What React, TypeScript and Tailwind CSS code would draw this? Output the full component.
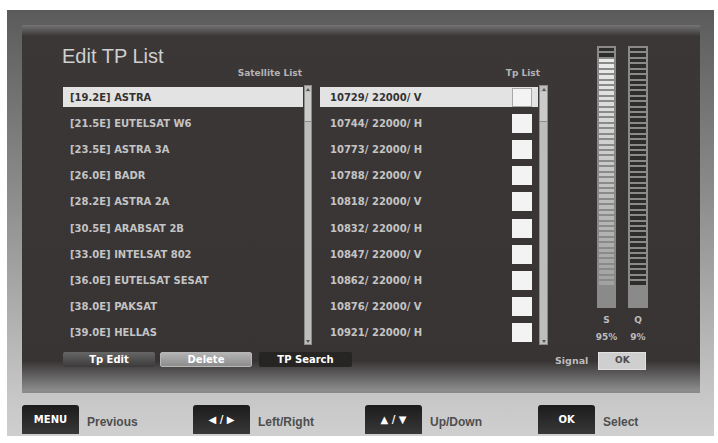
const satellites = [
  "[19.2E] ASTRA",
  "[21.5E] EUTELSAT W6",
  "[23.5E] ASTRA 3A",
  "[26.0E] BADR",
  "[28.2E] ASTRA 2A",
  "[30.5E] ARABSAT 2B",
  "[33.0E] INTELSAT 802",
  "[36.0E] EUTELSAT SESAT",
  "[38.0E] PAKSAT",
  "[39.0E] HELLAS",
]

const transponders = [
  "10729/ 22000/ V",
  "10744/ 22000/ H",
  "10773/ 22000/ H",
  "10788/ 22000/ V",
  "10818/ 22000/ V",
  "10832/ 22000/ H",
  "10847/ 22000/ V",
  "10862/ 22000/ H",
  "10876/ 22000/ V",
  "10921/ 22000/ H",
]

const SEGMENTS = 48

const ScrollBar = ({ width }: { width: string }) => (
  <div className={`flex h-[260px] flex-col border border-[#8c8c8c] bg-[#bdbdbd] ${width}`}>
    <div className="flex h-[6px] items-center justify-center">
      <div className="h-0 w-0 border-x-[2px] border-b-[3px] border-x-transparent border-b-[#555]" />
    </div>
    <div className="h-[30px] border-b border-[#8a8a8a] bg-[#cbcbcb]" />
    <div className="flex-1" />
    <div className="flex h-[6px] items-center justify-center">
      <div className="h-0 w-0 border-x-[2px] border-t-[3px] border-x-transparent border-t-[#555]" />
    </div>
  </div>
)

const SignalBar = ({ filled, width, fade }: { filled: number; width: string; fade: boolean }) => (
  <div className={`flex h-[262px] flex-col gap-[2px] bg-[#8a8a8a] p-[2px] ${width}`}>
    {Array.from({ length: SEGMENTS }, (_, i) => {
      const on = SEGMENTS - 1 - i < filled
      const l = fade && i < SEGMENTS - 4 ? Math.round(238 - (i / (SEGMENTS - 4)) * 78) : 138
      return (
        <div
          key={i}
          className="flex-1"
          style={{ backgroundColor: on ? `rgb(${l},${l},${l})` : "#2f2c2c" }}
        />
      )
    })}
  </div>
)

const FooterKey = ({ keyLabel, text }: { keyLabel: string; text: string }) => (
  <div className="flex items-start">
    <div className="flex h-[29px] w-[57px] items-center justify-center rounded-t-[3px] bg-[linear-gradient(to_bottom,#1c1c1c,#383838)] text-[10px] font-bold text-white">
      {keyLabel}
    </div>
    <span className="ml-[8px] mt-[8px] font-['Liberation_Sans',Arial,sans-serif] text-[12px] font-bold text-[#4e4e4e]">
      {text}
    </span>
  </div>
)

export default function App() {
  return (
    <div className="h-[443px] w-[718px] overflow-hidden bg-white pt-[10px] font-['DejaVu_Sans',sans-serif]">
      <div className="ml-[7px] flex h-[426px] w-[707px] flex-col bg-[linear-gradient(to_bottom,#5b5b5b_0%,#8e8e8e_45%,#c6c6c6_90%,#cfcfcf_100%)] pl-[15px] pt-[15px]">
        {/* main panel */}
        <div className="flex h-[368px] w-[678px] border-b-2 border-[#8a8a8a] bg-[linear-gradient(to_bottom,#747474_0px,#3b3737_11px,#383434_calc(100%_-_30px),#8e8e8e_100%)] pl-[41px] pt-[21px]">
          {/* left column */}
          <div className="flex w-[485px] flex-col">
            <div className="-ml-px h-[20px] font-['Liberation_Sans',Arial,sans-serif] text-[20px] leading-[20px] text-[#cfcfcf]">
              Edit TP List
            </div>
            <div className="mt-[2px] flex h-[10px] text-[9px] font-bold leading-[10px] text-[#b4b4b4]">
              <div className="w-[249px] pr-[10px] text-right">Satellite List</div>
              <div className="ml-[8px] w-[228px] pr-[8px] text-right">Tp List</div>
            </div>
            <div className="mt-[6px] flex h-[262px]">
              {/* satellite list */}
              <div className="flex w-[240px] flex-col">
                {satellites.map((name, i) => (
                  <div key={name} className="flex h-[26.2px] items-center">
                    <div
                      className={`flex h-[20px] w-full items-center pl-[7px] text-[10px] font-bold ${
                        i === 0 ? "bg-[#e3e3e3] text-[#333]" : "text-[#c4c4c4]"
                      }`}
                    >
                      {name}
                    </div>
                  </div>
                ))}
              </div>
              <div className="ml-px pt-px">
                <ScrollBar width="w-[8px]" />
              </div>
              {/* transponder list */}
              <div className="ml-[8px] flex w-[218px] flex-col">
                {transponders.map((tp, i) => (
                  <div key={tp} className="flex h-[26.2px] items-center">
                    <div
                      className={`flex h-[20px] w-full items-center pl-[10px] text-[10px] font-bold ${
                        i === 0 ? "bg-[#e3e3e3] text-[#333]" : "text-[#c4c4c4]"
                      }`}
                    >
                      {tp}
                      <div
                        className={`ml-auto mr-[6px] h-[19px] w-[20px] bg-[#f3f3f3] ${
                          i === 0 ? "border border-[#a8a8a8]" : ""
                        }`}
                      />
                    </div>
                  </div>
                ))}
              </div>
              <div className="ml-px pt-px">
                <ScrollBar width="w-[9px]" />
              </div>
            </div>
            <div className="mt-[6px] flex h-[15px] text-[10px] font-bold text-white">
              <div className="flex w-[92px] items-center justify-center rounded-[2px] bg-[linear-gradient(to_bottom,#666,#3c3a3a)]">
                Tp Edit
              </div>
              <div className="ml-[5px] flex w-[92px] items-center justify-center rounded-[2px] border border-[#b8b8b8] bg-[linear-gradient(to_bottom,#b4b4b4,#8c8c8c)]">
                Delete
              </div>
              <div className="ml-[7px] flex w-[93px] items-center justify-center rounded-[2px] bg-[#272424]">
                TP Search
              </div>
            </div>
          </div>
          {/* right column: signal */}
          <div className="ml-[7px] flex w-[93px] flex-col">
            <div className="flex gap-[12px] pl-[42px]">
              <SignalBar filled={46} width="w-[19px]" fade />
              <SignalBar filled={4} width="w-[20px]" fade={false} />
            </div>
            <div className="mt-[7px] flex h-[10px] gap-[12px] pl-[42px] text-[9px] font-bold leading-[10px] text-[#bdbdbd]">
              <div className="flex w-[19px] justify-center">S</div>
              <div className="flex w-[20px] justify-center">Q</div>
            </div>
            <div className="mt-[7px] flex h-[10px] gap-[12px] pl-[42px] text-[9px] font-bold leading-[10px] text-[#bdbdbd]">
              <div className="flex w-[19px] justify-center whitespace-nowrap">95%</div>
              <div className="flex w-[20px] justify-center whitespace-nowrap">9%</div>
            </div>
            <div className="mt-[10px] flex h-[18px] items-center">
              <span className="text-[9.5px] font-bold text-[#bdbdbd]">Signal</span>
              <div className="ml-[10px] flex h-[18px] w-[48px] items-center justify-center border border-[#e2e2e2] bg-[#cfcfcf] text-[9px] font-bold text-[#4a4a4a]">
                OK
              </div>
            </div>
          </div>
        </div>
        {/* footer */}
        <div className="grid flex-1 grid-cols-[171px_172px_173px_1fr] pt-[12px]">
          <FooterKey keyLabel="MENU" text="Previous" />
          <FooterKey keyLabel="◀ / ▶" text="Left/Right" />
          <FooterKey keyLabel="▲ / ▼" text="Up/Down" />
          <FooterKey keyLabel="OK" text="Select" />
        </div>
      </div>
    </div>
  )
}
